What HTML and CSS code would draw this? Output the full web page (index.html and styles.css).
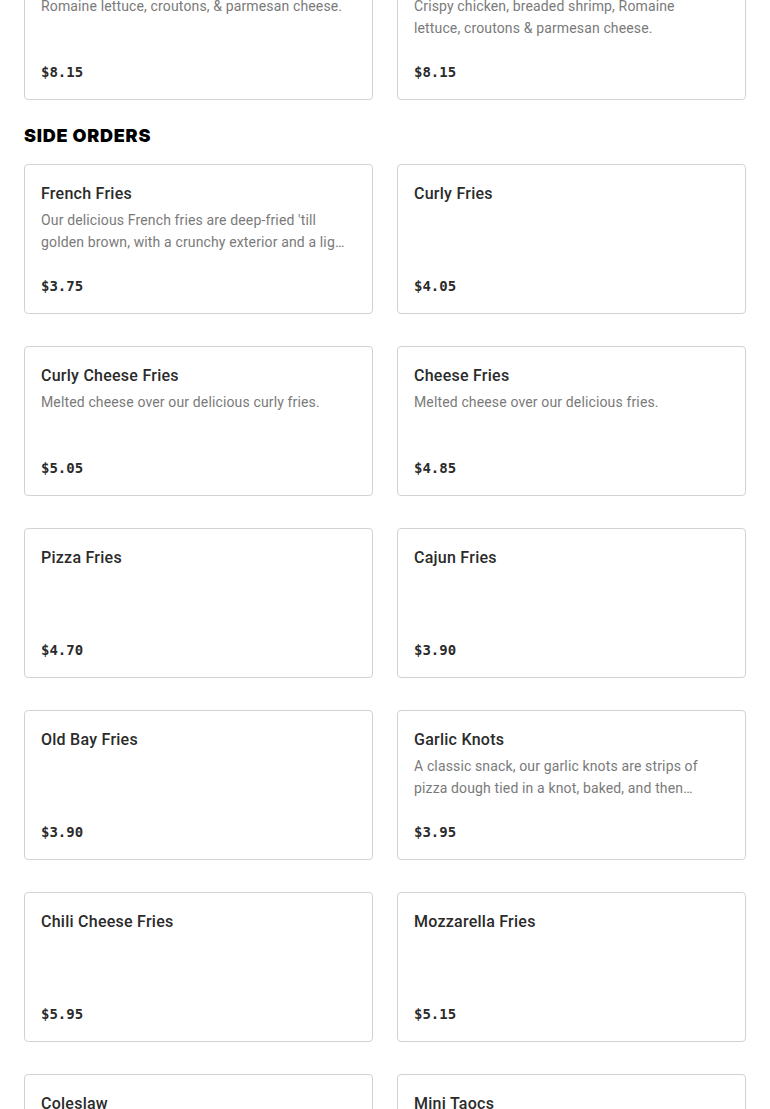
FILE: index.html
```html
<!DOCTYPE html>
<html>
<head>
<meta charset="utf-8">
<link rel="stylesheet" href="styles.css">
</head>
<body>
<div class="menu">
  <div class="grid grid-top">
    <div class="card">
      <div class="title">Caesar Salad</div>
      <div class="desc">Romaine lettuce, croutons, &amp; parmesan cheese.</div>
      <div class="price">$8.15</div>
    </div>
    <div class="card">
      <div class="title">Chicken &amp; Shrimp Caesar Salad</div>
      <div class="desc">Crispy chicken, breaded shrimp, Romaine lettuce, croutons &amp; parmesan cheese.</div>
      <div class="price">$8.15</div>
    </div>
  </div>

  <h2 class="section-title">SIDE ORDERS</h2>

  <div class="grid">
    <div class="card">
      <div class="title">French Fries</div>
      <div class="desc">Our delicious French fries are deep-fried 'till golden brown, with a crunchy exterior and a light, fluffy interior.</div>
      <div class="price">$3.75</div>
    </div>
    <div class="card">
      <div class="title">Curly Fries</div>
      <div class="desc"></div>
      <div class="price">$4.05</div>
    </div>
    <div class="card">
      <div class="title">Curly Cheese Fries</div>
      <div class="desc">Melted cheese over our delicious curly fries.</div>
      <div class="price">$5.05</div>
    </div>
    <div class="card">
      <div class="title">Cheese Fries</div>
      <div class="desc">Melted cheese over our delicious fries.</div>
      <div class="price">$4.85</div>
    </div>
    <div class="card">
      <div class="title">Pizza Fries</div>
      <div class="desc"></div>
      <div class="price">$4.70</div>
    </div>
    <div class="card">
      <div class="title">Cajun Fries</div>
      <div class="desc"></div>
      <div class="price">$3.90</div>
    </div>
    <div class="card">
      <div class="title">Old Bay Fries</div>
      <div class="desc"></div>
      <div class="price">$3.90</div>
    </div>
    <div class="card">
      <div class="title">Garlic Knots</div>
      <div class="desc">A classic snack, our garlic knots are strips of pizza dough tied in a knot, baked, and then brushed with garlic butter.</div>
      <div class="price">$3.95</div>
    </div>
    <div class="card">
      <div class="title">Chili Cheese Fries</div>
      <div class="desc"></div>
      <div class="price">$5.95</div>
    </div>
    <div class="card">
      <div class="title">Mozzarella Fries</div>
      <div class="desc"></div>
      <div class="price">$5.15</div>
    </div>
    <div class="card">
      <div class="title">Coleslaw</div>
      <div class="desc"></div>
      <div class="price">$2.50</div>
    </div>
    <div class="card">
      <div class="title">Mini Taocs</div>
      <div class="desc"></div>
      <div class="price">$4.95</div>
    </div>
  </div>
</div>
</body>
</html>
```

FILE: styles.css
```css
* { box-sizing: border-box; }

html, body {
  margin: 0;
  padding: 0;
  background: #ffffff;
}

body {
  font-family: "Roboto", "Liberation Sans", sans-serif;
  color: #2d2d2d;
}

.menu {
  padding: 0 24px;
}

.grid {
  display: grid;
  grid-template-columns: 1fr 1fr;
  column-gap: 24px;
  row-gap: 32px;
}

.grid-top {
  margin-top: -50px;
}

.card {
  height: 150px;
  border: 1px solid #d2d2d2;
  border-radius: 4px;
  padding: 16px 16px 17px 16px;
  display: flex;
  flex-direction: column;
  background: #fff;
}

.title {
  padding-top: 1px;
  font-size: 16px;
  line-height: 24px;
  font-weight: 500;
  letter-spacing: 0.25px;
  color: #2b2b2b;
  white-space: nowrap;
  overflow: hidden;
  text-overflow: ellipsis;
}

.desc {
  margin-top: 3px;
  padding-right: 5px;
  font-size: 14px;
  line-height: 22px;
  letter-spacing: 0.14px;
  color: #7a7a7a;
  display: -webkit-box;
  -webkit-line-clamp: 2;
  -webkit-box-orient: vertical;
  overflow: hidden;
}

.price {
  margin-top: auto;
  font-family: "DejaVu Sans Mono", "Liberation Mono", monospace;
  font-weight: 700;
  font-size: 14px;
  line-height: 20px;
  color: #2b2b2b;
}

.section-title {
  margin: 24px 0 16px 0;
  font-family: "Inter", "Liberation Sans", sans-serif;
  font-size: 18px;
  line-height: 24px;
  font-weight: 900;
  letter-spacing: 0.75px;
  color: #000;
}
```
